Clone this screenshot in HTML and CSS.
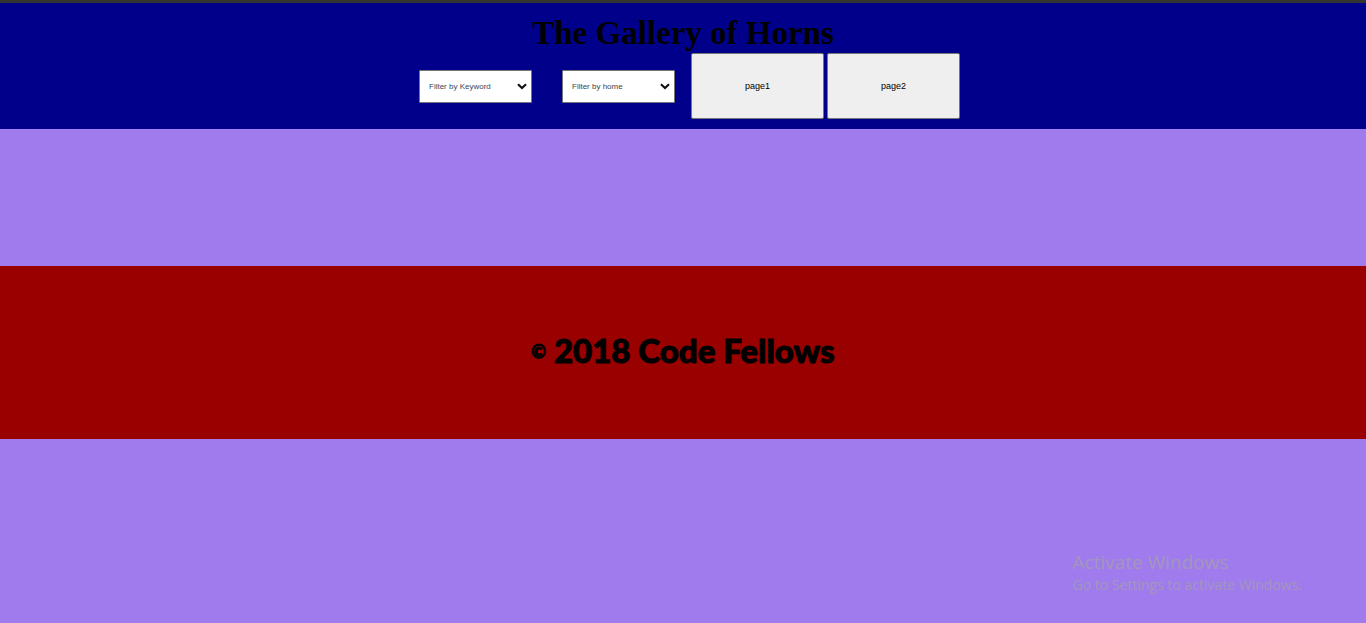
FILE: index.html
```html
<!DOCTYPE html>
<html lang="en">
<head>
<meta charset="utf-8">
<title>The Gallery of Horns</title>
<link rel="stylesheet" href="styles.css">
</head>
<body>
<header class="site-header">
  <h1 class="title">The Gallery of Horns</h1>
  <div class="controls">
    <div class="filters">
      <select class="filter filter-keyword" aria-label="Filter by Keyword"><option>Filter by Keyword</option></select>
      <select class="filter" aria-label="Filter by home"><option>Filter by home</option></select>
    </div>
    <div class="pages">
      <button class="page-button" type="button">page1</button>
      <button class="page-button" type="button">page2</button>
    </div>
  </div>
</header>
<main class="gallery"></main>
<footer class="site-footer"><p class="copyright"><span class="mark">©</span> 2018 Code Fellows</p></footer>
<aside class="watermark">
  <p class="watermark-title">Activate Windows</p>
  <p class="watermark-text">Go to Settings to activate Windows.</p>
</aside>
</body>
</html>
```

FILE: styles.css
```css
* {
  box-sizing: border-box;
}

body {
  margin: 0;
  background: #a07bee;
  font-family: "Liberation Serif", serif;
}

h1,
p {
  margin: 0;
}

.site-header {
  padding: 12px 0 10px;
  border-top: 3px solid #333333;
  background: #00008b;
  text-align: center;
}

.title {
  padding-bottom: 2px;
  font-size: 33px;
  line-height: 36px;
}

.controls {
  display: flex;
  justify-content: center;
  align-items: center;
  gap: 16px;
  padding-left: 13px;
}

.filters {
  display: flex;
  gap: 30px;
}

.filter {
  appearance: none;
  width: 113px;
  height: 33px;
  padding: 0 20px 0 9px;
  border: 1px solid #767676;
  border-radius: 1px;
  background: #ffffff url("data:image/svg+xml,%3Csvg xmlns='http://www.w3.org/2000/svg' width='10' height='7' viewBox='0 0 10 7'%3E%3Cpath d='M1 1.2L5 5L9 1.2' fill='none' stroke='%23101010' stroke-width='2.1'/%3E%3C/svg%3E") no-repeat right 4px center;
  color: #444444;
  font: 8px "Liberation Sans", sans-serif;
}

.filter-keyword {
  color: #34495e;
}

.pages {
  display: flex;
  gap: 3px;
}

.page-button {
  width: 133px;
  height: 66px;
  border: 1px solid #767676;
  border-radius: 2px;
  background: #efefef;
  color: #000000;
  font: 9px "Liberation Sans", sans-serif;
}

.gallery {
  height: 137px;
}

.site-footer {
  padding: 62px 0 67px;
  background: #990000;
  text-align: center;
}

.copyright {
  font: 900 33px/44px Lato, sans-serif;
  -webkit-text-stroke: 1px #000000;
}

.mark {
  font-size: 18px;
  line-height: 18px;
  vertical-align: 5px;
}

.watermark {
  position: absolute;
  right: 64px;
  bottom: 28px;
  color: #a297bb;
  font-family: "Open Sans", sans-serif;
}

.watermark-title {
  font-size: 19px;
  line-height: 26px;
}

.watermark-text {
  font-size: 14px;
  line-height: 20px;
}
```
